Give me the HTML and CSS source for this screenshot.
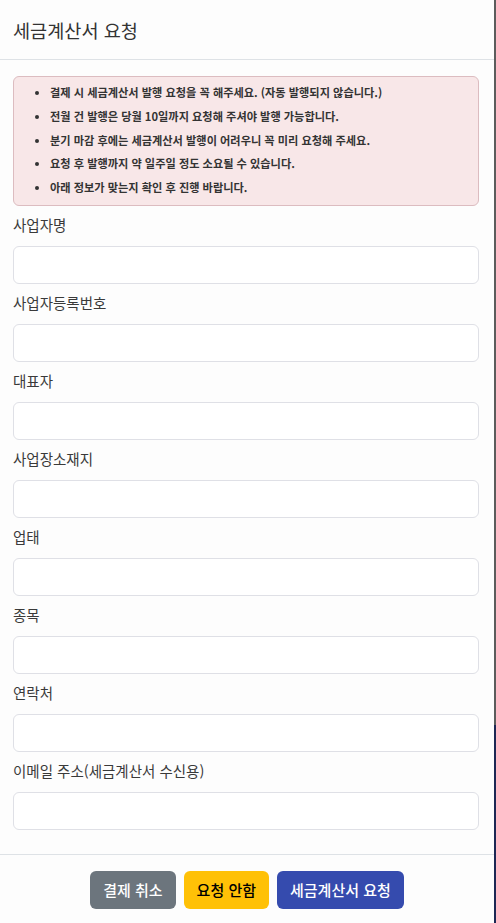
FILE: index.html
```html
<!DOCTYPE html>
<html lang="ko">
<head>
  <meta charset="UTF-8">
  <meta name="viewport" content="width=device-width, initial-scale=1.0">
  <title>세금계산서 요청</title>
  <link rel="stylesheet" href="styles.css">
</head>
<body>
  <div class="modal">
    <div class="modal-header">
      <h5 class="modal-title">세금계산서 요청</h5>
    </div>

    <div class="modal-body">
      <div class="alert">
        <ul>
          <li>결제 시 세금계산서 발행 요청을 꼭 해주세요. (자동 발행되지 않습니다.)</li>
          <li>전월 건 발행은 당월 10일까지 요청해 주셔야 발행 가능합니다.</li>
          <li>분기 마감 후에는 세금계산서 발행이 어려우니 꼭 미리 요청해 주세요.</li>
          <li>요청 후 발행까지 약 일주일 정도 소요될 수 있습니다.</li>
          <li>아래 정보가 맞는지 확인 후 진행 바랍니다.</li>
        </ul>
      </div>

      <div class="field">
        <label for="company">사업자명</label>
        <input type="text" id="company">
      </div>
      <div class="field">
        <label for="biz-no">사업자등록번호</label>
        <input type="text" id="biz-no">
      </div>
      <div class="field">
        <label for="ceo">대표자</label>
        <input type="text" id="ceo">
      </div>
      <div class="field">
        <label for="address">사업장소재지</label>
        <input type="text" id="address">
      </div>
      <div class="field">
        <label for="biz-type">업태</label>
        <input type="text" id="biz-type">
      </div>
      <div class="field">
        <label for="biz-item">종목</label>
        <input type="text" id="biz-item">
      </div>
      <div class="field">
        <label for="phone">연락처</label>
        <input type="text" id="phone">
      </div>
      <div class="field">
        <label for="email">이메일 주소(세금계산서 수신용)</label>
        <input type="email" id="email">
      </div>
    </div>

    <div class="modal-footer">
      <button class="btn btn-secondary">결제 취소</button>
      <button class="btn btn-warning">요청 안함</button>
      <button class="btn btn-primary">세금계산서 요청</button>
    </div>
  </div>
</body>
</html>
```

FILE: styles.css
```css
body {
  margin: 0;
  font-family: 'Noto Sans CJK KR', 'Noto Sans', sans-serif;
  color: #333;
  /* 모달 뒤 어두운 배경 */
  background: linear-gradient(#5c5c5c 0, #5c5c5c 725px, #1d2754 725px);
  min-height: 923px;
}

.modal {
  width: 494px;
  min-height: 923px;
  background-color: #fdfdfd;
}

.modal-header {
  height: 59px;
  display: flex;
  align-items: center;
  padding: 0 15px 0 13px;
  border-bottom: 1px solid #dee2e6;
}

.modal-title {
  margin: 0;
  font-size: 18.6px;
  font-weight: 400;
  color: #333;
}

.modal-body {
  padding: 16px 15px 24px 13px;
}

.alert {
  background-color: #f8e7e8;
  border: 1px solid #dcbcc0;
  border-radius: 6px;
  padding: 4px 0 5px 0;
}

.alert ul {
  margin: 0;
  padding-left: 36px;
}

.alert li {
  font-size: 11.2px;
  font-weight: 700;
  line-height: 23.8px;
  color: #333;
}

.field {
  margin-top: 8px;
}

.field label {
  display: block;
  font-size: 14.5px;
  line-height: 22px;
  margin-bottom: 10px;
  color: #3a3a3a;
}

.field input {
  display: block;
  box-sizing: border-box;
  width: 100%;
  height: 38px;
  border: 1px solid #dfe0e6;
  border-radius: 6px;
  background-color: #fff;
  padding: 6px 12px;
  font-size: 14px;
}

.field input:focus {
  outline: none;
  border-color: #86a0e8;
}

.modal-footer {
  border-top: 1px solid #dee2e6;
  display: flex;
  justify-content: center;
  gap: 8px;
  padding: 16px 0;
}

.btn {
  height: 38px;
  padding: 0 13px;
  border: none;
  border-radius: 6px;
  font-family: inherit;
  font-size: 15px;
  font-weight: 500;
  cursor: pointer;
}

.btn-secondary {
  background-color: #6c757d;
  color: #fff;
}

.btn-warning {
  background-color: #ffc107;
  color: #000;
}

.btn-primary {
  background-color: #354bae;
  color: #fff;
}
```
